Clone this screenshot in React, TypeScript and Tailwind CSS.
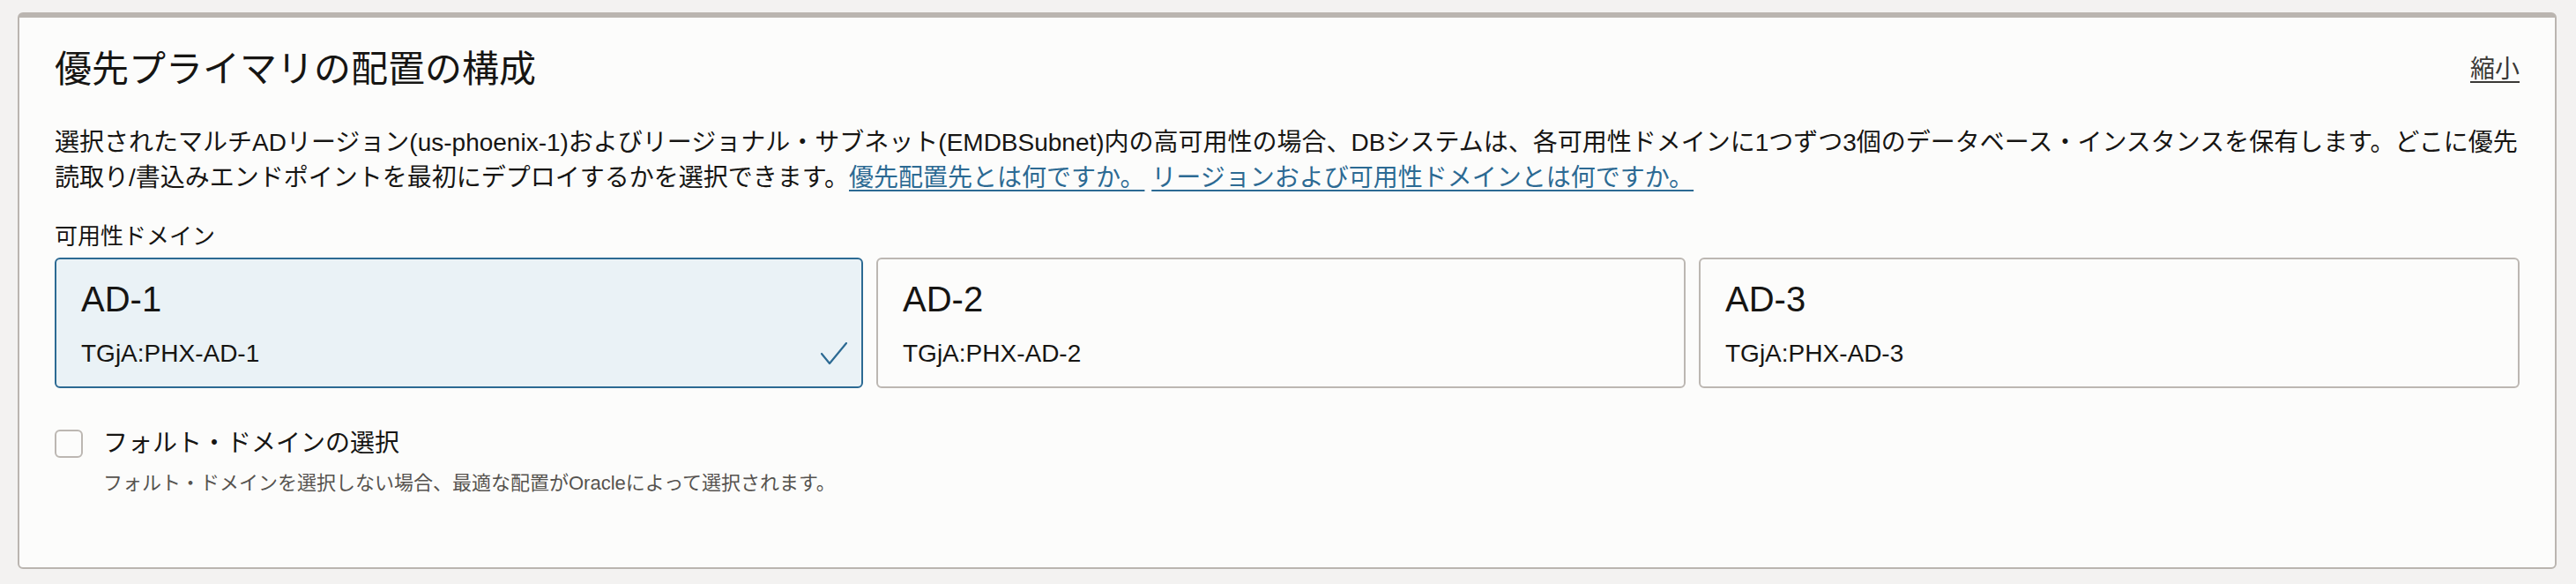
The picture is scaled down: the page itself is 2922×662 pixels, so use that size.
import React from "react";

const domains = [
  { name: "AD-1", label: "TGjA:PHX-AD-1", selected: true },
  { name: "AD-2", label: "TGjA:PHX-AD-2", selected: false },
  { name: "AD-3", label: "TGjA:PHX-AD-3", selected: false },
];

function Check() {
  return (
    <svg width="30" height="26" viewBox="0 0 30 26" fill="none" className="shrink-0">
      <polyline
        points="1,13 10,24 29,1"
        stroke="#2c6a93"
        strokeWidth="2.2"
        strokeLinecap="round"
        strokeLinejoin="round"
      />
    </svg>
  );
}

export default function App() {
  return (
    <div className="min-h-[662px] w-[2922px] bg-[#f3f2f1] pt-[14px] pl-[20px] pr-[22px] font-['Liberation_Sans','Noto_Sans_CJK_JP',sans-serif] text-[#161513]">
      <div className="rounded-[6px] border-2 border-t-[6px] border-[#bab5b0] bg-[#fcfcfb] px-[40px] pt-[33px] pb-[80px]">
        {/* header */}
        <div className="flex items-center justify-between">
          <h2 className="text-[42px] leading-[52px] font-normal">優先プライマリの配置の構成</h2>
          <a className="text-[28px] leading-[36px] text-[#3a3936] underline decoration-[2px] underline-offset-[4px] cursor-pointer">
            縮小
          </a>
        </div>

        <p className="mt-[37px] text-[28px] leading-[40px]">
          選択されたマルチADリージョン(us-phoenix-1)およびリージョナル・サブネット(EMDBSubnet)内の高可用性の場合、DBシステムは、各可用性ドメインに1つずつ3個のデータベース・インスタンスを保有します。どこに優先
          <br />
          読取り/書込みエンドポイントを最初にデプロイするかを選択できます。
          <a className="text-[#2c6a93] underline decoration-[2px] underline-offset-[4px] cursor-pointer">
            優先配置先とは何ですか。
          </a>{" "}
          <a className="text-[#2c6a93] underline decoration-[2px] underline-offset-[4px] cursor-pointer">
            リージョンおよび可用性ドメインとは何ですか。
          </a>
        </p>

        <div className="mt-[28px] text-[26px] leading-[36px]">可用性ドメイン</div>

        <div className="mt-[6px] grid grid-cols-[917px_918px_1fr] gap-[15px]">
          {domains.map((d) => (
            <div
              key={d.name}
              className={`h-[148px] rounded-[6px] border-2 px-[28px] pt-[21px] cursor-pointer ${
                d.selected ? "border-[#2c6a93] bg-[#eaf2f6]" : "border-[#bcb7b2] bg-[#fcfcfb]"
              }`}
            >
              <div className="text-[40px] leading-[48px]">{d.name}</div>
              <div className="mt-[20px] flex items-center justify-between -mr-[12px]">
                <span className="text-[28px] leading-[36px]">{d.label}</span>
                {d.selected && <Check />}
              </div>
            </div>
          ))}
        </div>

        <div className="mt-[47px] flex items-center gap-[23px]">
          <span className="h-[32px] w-[32px] rounded-[6px] border-2 border-[#bcb7b2] bg-[#fcfcfb]" />
          <span className="text-[28px] leading-[32px]">フォルト・ドメインの選択</span>
        </div>
        <div className="mt-[14px] pl-[55px] text-[22px] leading-[30px] text-[#56534f]">
          フォルト・ドメインを選択しない場合、最適な配置がOracleによって選択されます。
        </div>
      </div>
    </div>
  );
}
